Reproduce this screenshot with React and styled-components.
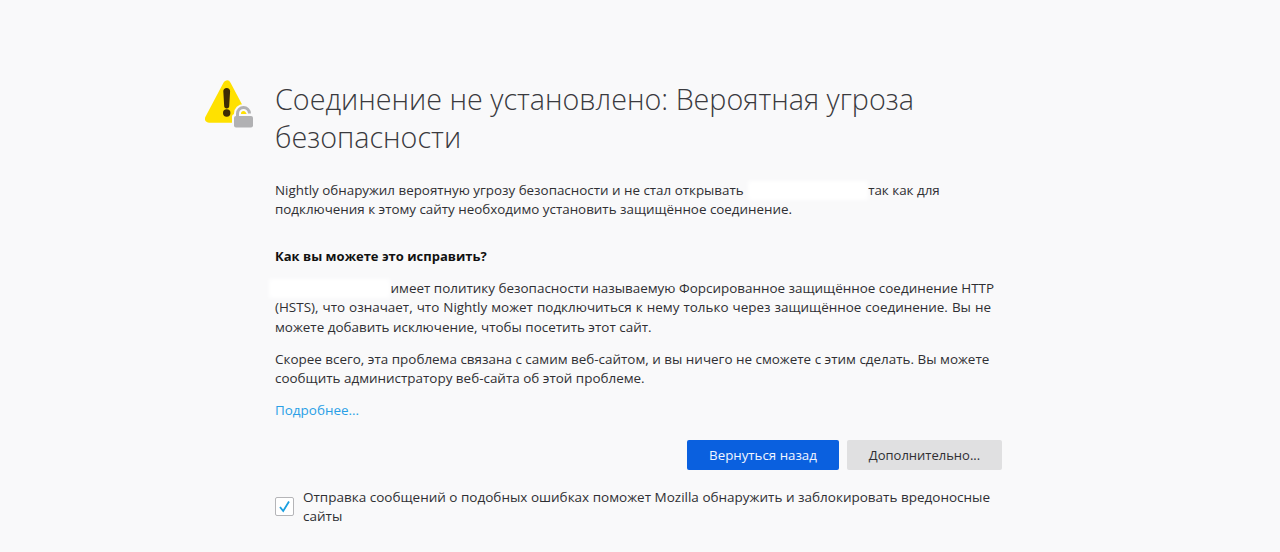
import styled, { createGlobalStyle } from "styled-components"

const Global = createGlobalStyle`
  html, body {
    margin: 0;
    background: #f9f9fa;
  }
  body {
    font-family: "Open Sans", "Noto Sans", sans-serif;
    color: #2f2f33;
  }
`

const Page = styled.div`
  display: flex;
  justify-content: flex-start;
  height: 552px;
  padding: 80px 0 0 205px;
  box-sizing: border-box;
  overflow: hidden;
`

const IconSlot = styled.div`
  width: 70px;
  flex: none;
`

const Content = styled.div`
  width: 727px;
`

const Title = styled.h1`
  margin: 0;
  font-size: 28.7px;
  font-weight: 300;
  line-height: 37.5px;
  color: #3a3a3e;
`

const Para = styled.p`
  margin: ${(p) => p.$top}px 0 0;
  font-size: ${(p) => p.$size || 13.45}px;
  line-height: 19.4px;
  white-space: nowrap;
`

const WideLine = styled.span`
  word-spacing: 0.55px;
`

const Heading = styled.h2`
  margin: 27px 0 0;
  font-size: 13px;
  font-weight: 700;
  line-height: 19px;
  color: #111;
`

const Redacted = styled.span`
  display: inline-block;
  width: ${(p) => p.$width}px;
  height: 13px;
  margin-left: ${(p) => p.$left || 0}px;
  vertical-align: -2px;
  background: #fff;
  box-shadow: 0 0 4px 3px #fff;
`

const More = styled.a`
  display: block;
  margin-top: 12px;
  font-size: 13.45px;
  line-height: 19px;
  color: #2a9fe6;
`

const Buttons = styled.div`
  display: flex;
  justify-content: flex-end;
  gap: 8px;
  margin-top: 20px;
`

const Button = styled.button`
  width: ${(p) => p.$width}px;
  height: 30px;
  padding: 0;
  border: none;
  border-radius: 2px;
  background: ${(p) => (p.$primary ? "#0a60df" : "#e0e0e1")};
  color: ${(p) => (p.$primary ? "#f2f6ff" : "#2f2f33")};
  font-family: inherit;
  font-size: ${(p) => (p.$primary ? 13.3 : 13)}px;
`

const Report = styled.div`
  display: flex;
  gap: 9px;
  margin-top: 18px;
`

const Check = styled.span`
  flex: none;
  display: flex;
  align-items: center;
  justify-content: center;
  width: 17px;
  height: 17px;
  margin-top: 9px;
  border: 1px solid #b5b5b8;
  border-radius: 2px;
  background: #fff;
`

const ReportText = styled.div`
  font-size: 13.5px;
  line-height: 19px;
  white-space: nowrap;
`

const WarningIcon = () => (
  <svg width="50" height="50" viewBox="0 0 50 50">
    <path
      d="M22 4.500L4 38.700H40z"
      fill="#ffe100"
      stroke="#ffe100"
      strokeWidth="8"
      strokeLinejoin="round"
    />
    <path d="M21.700 8c-2 0-3.500 1.400-3.400 3.200l.9 15c.1 1.300 1 2.200 2.500 2.200s2.400-.9 2.500-2.200l.9-15c.1-1.800-1.400-3.200-3.400-3.200z" fill="#3d2c05" />
    <circle cx="21.700" cy="33" r="3.700" fill="#3d2c05" />
    <path
      d="M32.500 36v-2.500a6 6 0 0 1 12 0"
      fill="none"
      stroke="#f9f9fa"
      strokeWidth="7"
    />
    <rect x="27" y="34" width="23" height="15" rx="3" fill="#f9f9fa" />
    <path
      d="M32.500 36v-2.500a6 6 0 0 1 12 0"
      fill="none"
      stroke="#b1b1b3"
      strokeWidth="3"
    />
    <rect x="29" y="36" width="19" height="11.500" rx="2" fill="#b1b1b3" />
  </svg>
)

const App = () => (
  <Page>
    <Global />
    <IconSlot>
      <WarningIcon />
    </IconSlot>
    <Content>
      <Title>
        Соединение не установлено: Вероятная угроза
        <br />
        безопасности
      </Title>
      <Para $top={26} $size={13.38}>
        Nightly обнаружил вероятную угрозу безопасности и не стал открывать
        <Redacted $width={114} $left={7} /> так как для
        <br />
        подключения к этому сайту необходимо установить защищённое соединение.
      </Para>
      <Heading>Как вы можете это исправить?</Heading>
      <Para $top={13}>
        <Redacted $width={115} $left={-3} /> имеет политику безопасности называемую Форсированное защищённое соединение HTTP
        <br />
        <WideLine>
          (HSTS), что означает, что Nightly может подключиться к нему только через защищённое соединение. Вы не
        </WideLine>
        <br />
        можете добавить исключение, чтобы посетить этот сайт.
      </Para>
      <Para $top={13}>
        Скорее всего, эта проблема связана с самим веб-сайтом, и вы ничего не сможете с этим сделать. Вы можете
        <br />
        сообщить администратору веб-сайта об этой проблеме.
      </Para>
      <More>Подробнее...</More>
      <Buttons>
        <Button $primary $width={152}>Вернуться назад</Button>
        <Button $width={155}>Дополнительно...</Button>
      </Buttons>
      <Report>
        <Check>
          <svg width="13" height="13" viewBox="0 0 13 13">
            <path d="M2 7l3.200 4L11 1.500" fill="none" stroke="#1a9fe0" strokeWidth="1.800" />
          </svg>
        </Check>
        <ReportText>
          Отправка сообщений о подобных ошибках поможет Mozilla обнаружить и заблокировать вредоносные
          <br />
          сайты
        </ReportText>
      </Report>
    </Content>
  </Page>
)

export default App
